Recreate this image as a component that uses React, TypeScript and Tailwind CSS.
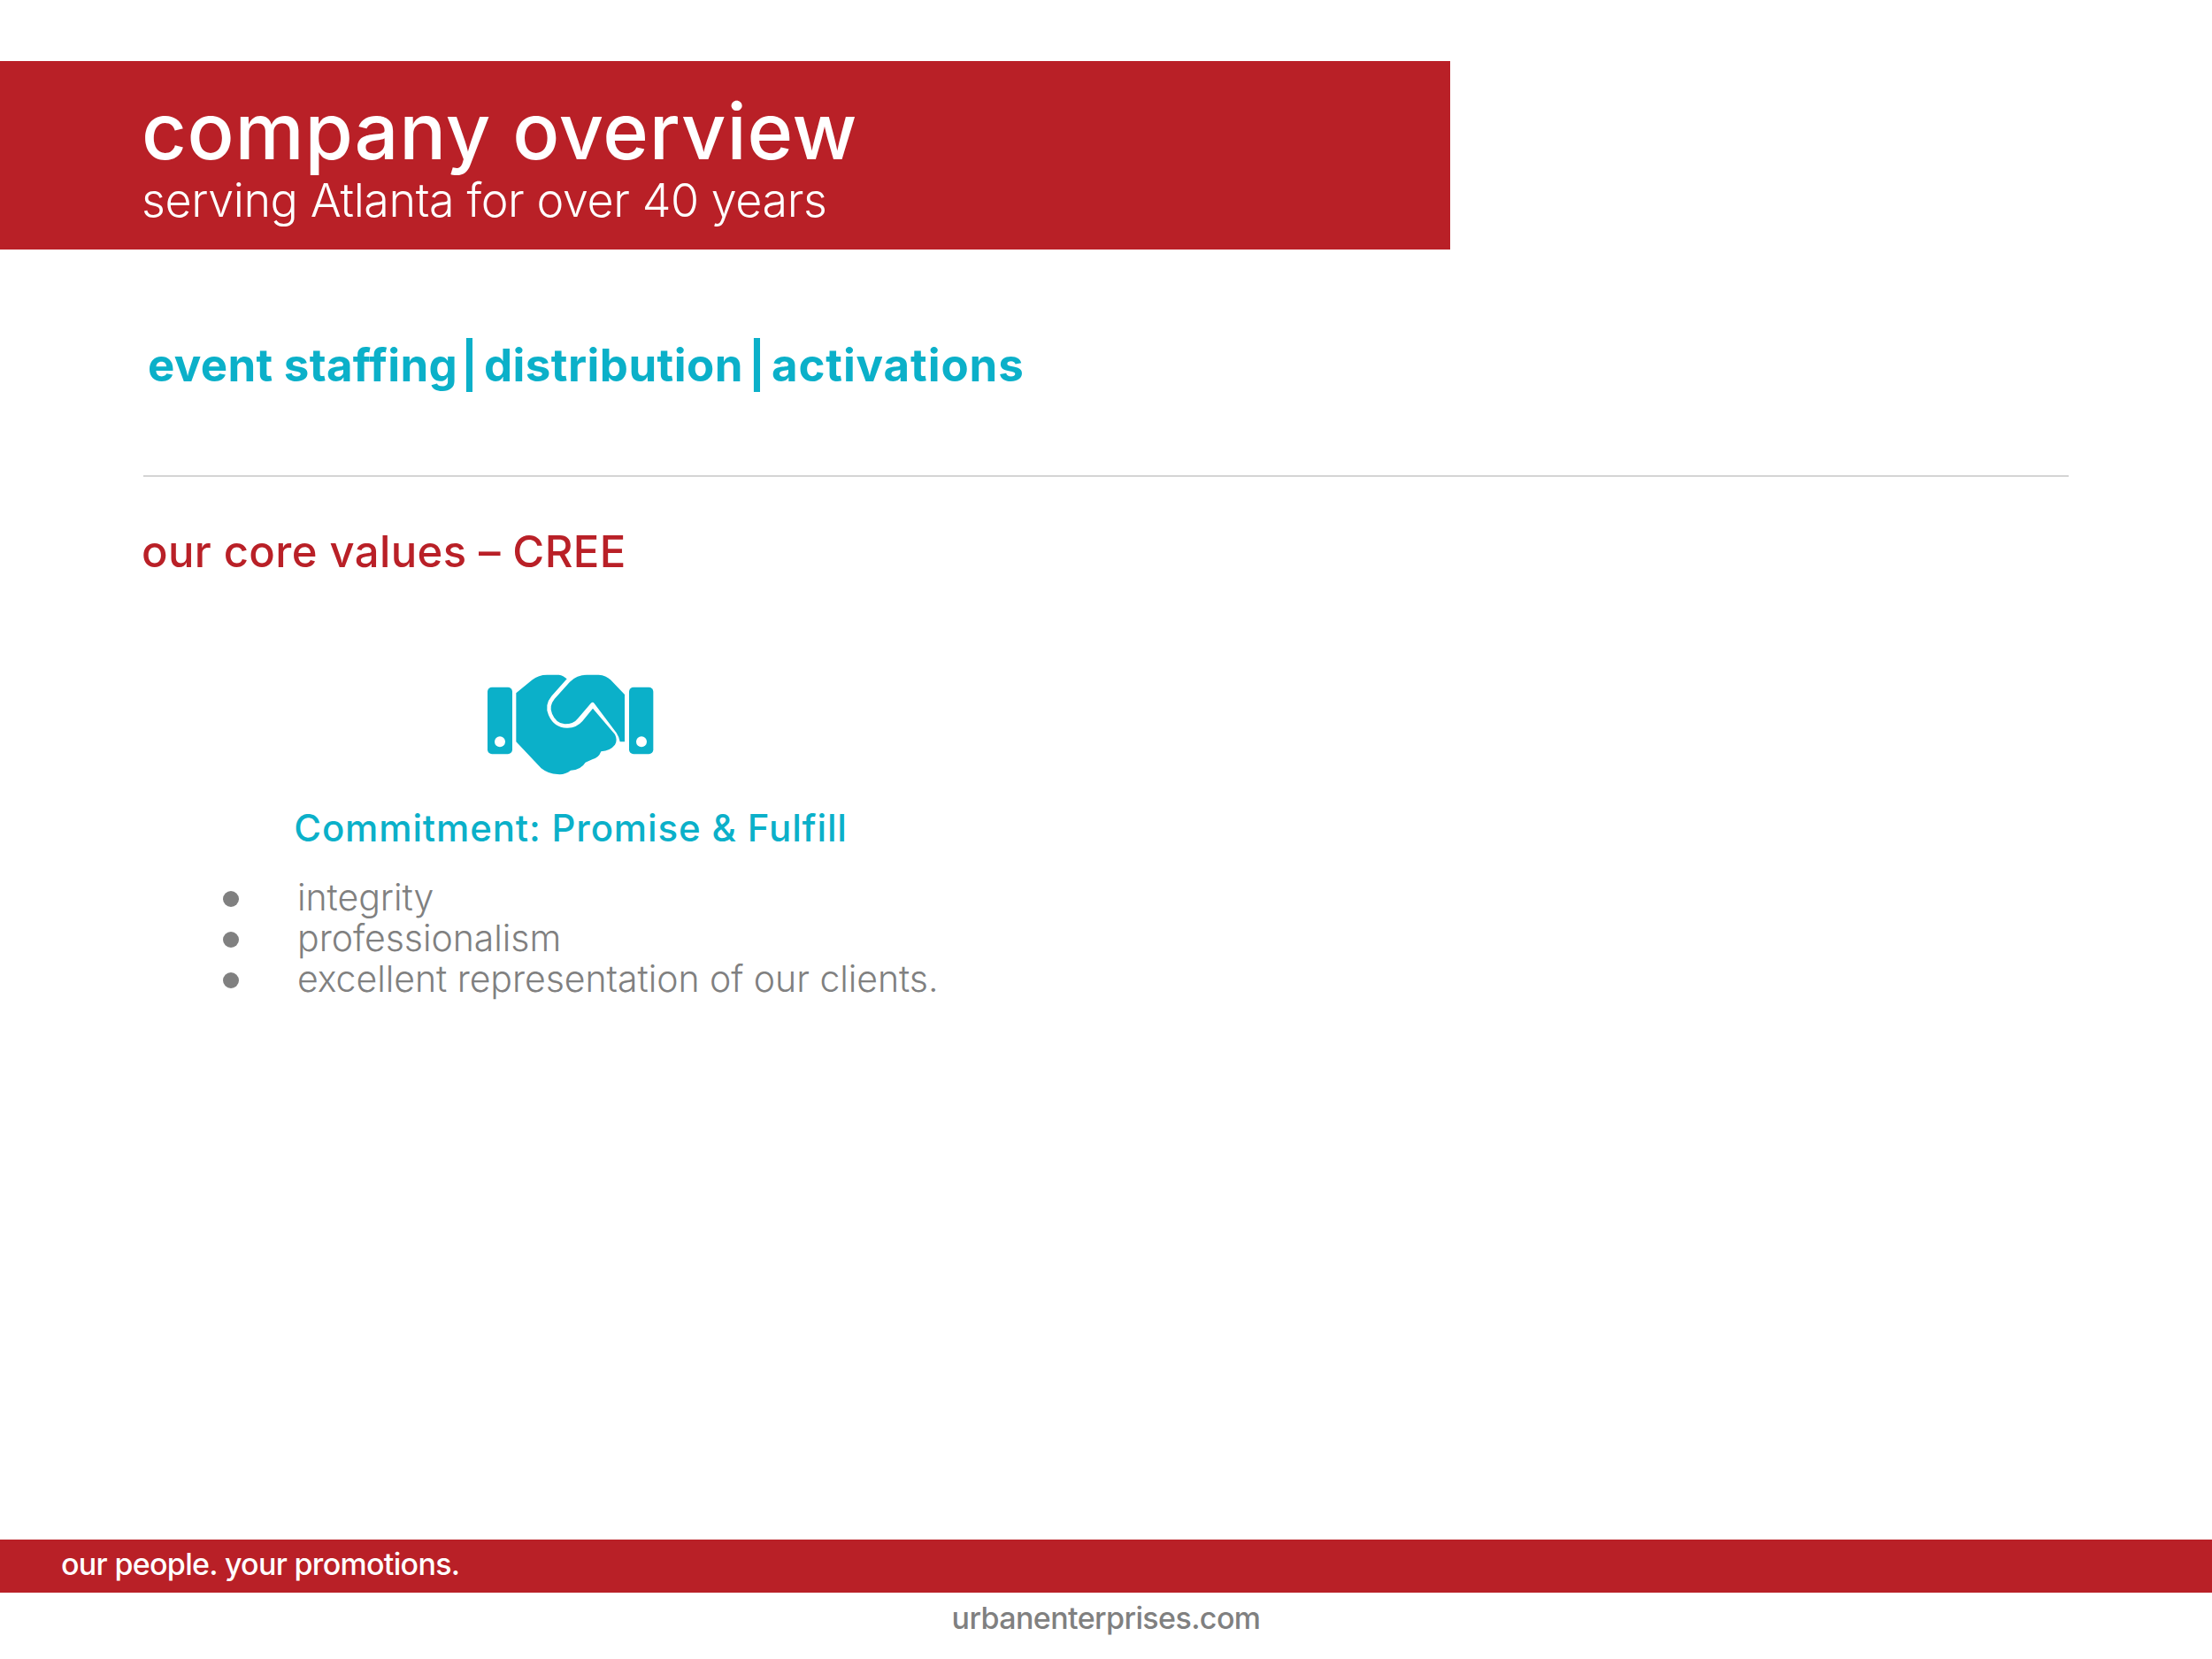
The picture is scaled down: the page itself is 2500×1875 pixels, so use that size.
export default function App() {
  return (
    <div className="flex h-[1875px] w-[2500px] flex-col bg-white font-['Inter',sans-serif]">
      <header className="mt-[69px] flex h-[213px] w-[1639px] flex-col bg-[#b92027] pl-[160px] text-white">
        <h1 className="mt-[30px] text-[88px] leading-[98px] font-medium tracking-[0.8px]">company overview</h1>
        <p className="text-[52px] leading-[60px] font-light tracking-[-0.42px]">serving Atlanta for over 40 years</p>
      </header>
      <p className="mt-[100px] ml-[167px] flex text-[51px] leading-[62px] font-bold text-[#0bb0c9]">
        <span className="tracking-[0.3px]">event staffing</span>
        <span className="ml-[4px]">|</span>
        <span className="ml-[7px] tracking-[0.45px]">distribution</span>
        <span className="ml-[6px]">|</span>
        <span className="ml-[7px] tracking-[0.9px]">activations</span>
      </p>
      <hr className="mt-[93px] ml-[162px] w-[2176px] border-t-2 border-[#d4d4d4]" />
      <h2 className="mt-[55px] ml-[160px] text-[49px] leading-[60px] font-medium tracking-[0.4px] text-[#b92027]">our core values – CREE</h2>
      <section className="mt-[86px] ml-[162px] flex w-[966px] flex-col items-center">
        <svg className="h-[150px] w-[240px]" viewBox="15 0 720 450" fill="#0bb0c9">
          <rect x="93" y="110" width="84" height="227" rx="15" />
          <circle cx="135" cy="295" r="18" fill="#fff" />
          <rect x="573" y="110" width="82" height="227" rx="15" />
          <circle cx="615" cy="295" r="18" fill="#fff" />
          <path d="M190 130 L245 85 Q265 68 295 68 L335 68 Q350 70 362 82 L310 140 Q285 170 300 205 Q320 250 365 248 Q395 248 415 225 L450 182 L525 270 Q535 290 525 305 Q510 325 478 328 Q470 350 448 355 L425 365 Q410 390 375 392 Q355 408 330 405 Q300 405 275 385 L190 295 Z" />
          <path d="M372 92 Q395 68 430 68 L470 68 Q495 70 510 85 L558 135 L558 295 L542 295 Q540 280 530 265 L455 165 Q450 158 443 165 L400 215 Q385 235 355 235 Q325 232 312 200 Q300 175 320 150 Z" />
        </svg>
        <h3 className="mt-[21px] text-[42px] leading-[50px] font-medium tracking-[0.85px] text-[#0bb0c9]">Commitment: Promise &amp; Fulfill</h3>
      </section>
      <ul className="mt-[30px] ml-[252px] flex flex-col text-[41px] leading-[46px] font-light tracking-[-0.05px] text-[#808080]">
        {["integrity", "professionalism", "excellent representation of our clients."].map((t) => (
          <li key={t} className="flex items-center">
            <span className="mt-[3px] mr-[66px] h-[18px] w-[18px] rounded-full bg-[#808080]" />
            {t}
          </li>
        ))}
      </ul>
      <div className="mt-auto flex h-[60px] w-full items-center bg-[#b92027] pb-[5px] pl-[69px] text-[34px] font-medium tracking-[-0.7px] text-white">our people. your promotions.</div>
      <div className="flex h-[75px] justify-center pt-[8px] text-[34px] leading-[42px] font-medium tracking-[-0.6px] text-[#808080]">urbanenterprises.com</div>
    </div>
  );
}
